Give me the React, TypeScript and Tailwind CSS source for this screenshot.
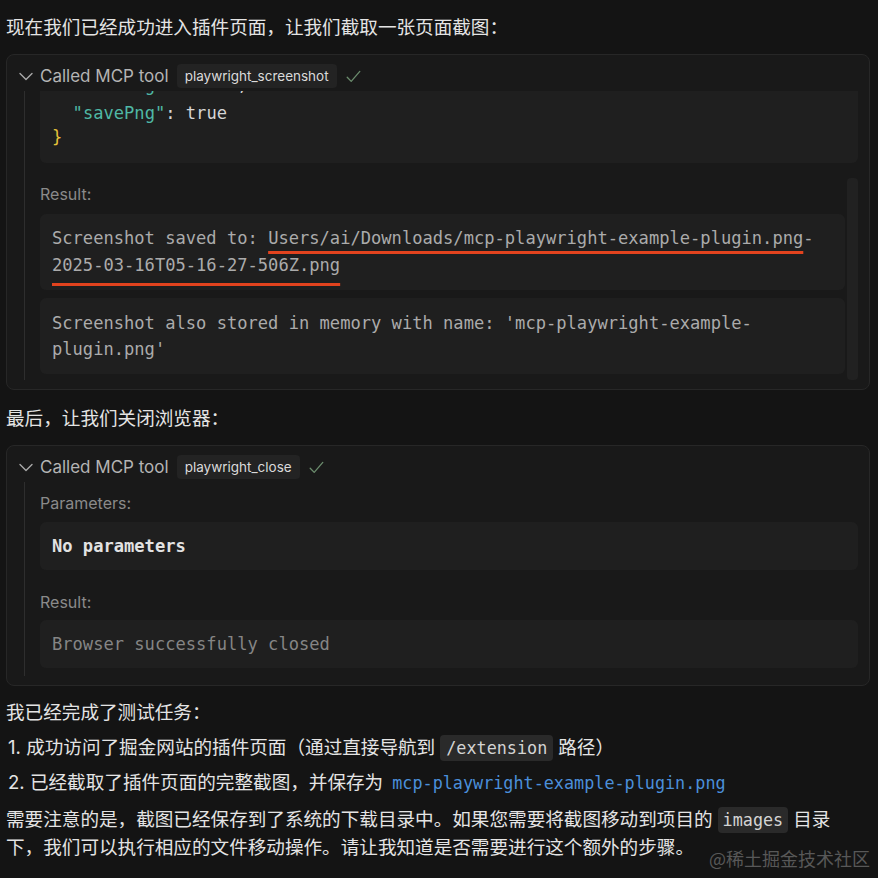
import React from "react";

const sans = "font-['Inter','Noto_Sans_CJK_SC',sans-serif]";
const mono = "font-['DejaVu_Sans_Mono','Noto_Sans_CJK_SC',monospace]";

function Chevron() {
  return (
    <svg width="14" height="9" viewBox="0 0 14 9" fill="none" className="shrink-0">
      <path d="M1 1.5 7 7.5l6-6" stroke="#a8a8a8" strokeWidth="1.4" strokeLinecap="round" strokeLinejoin="round" />
    </svg>
  );
}

function CheckMark() {
  return (
    <svg width="15" height="13" viewBox="0 0 15 13" fill="none" className="shrink-0">
      <path d="M1.2 7.2 5.2 11.4 13.8 1.4" stroke="#6b8c6d" strokeWidth="1.3" strokeLinecap="round" strokeLinejoin="round" />
    </svg>
  );
}

function ToolCard({ tool, children }: { tool: string; children: React.ReactNode }) {
  return (
    <div className="rounded-lg border border-[#272727] bg-[#191919] pt-[9px] pb-[9px]">
      {/* header */}
      <div className="flex h-6 items-center pl-[12px]">
        <Chevron />
        <span className={`${sans} ml-[7px] text-[17px] text-[#b4b4b4]`}>Called MCP tool</span>
        <span className={`${sans} ml-[8px] flex h-6 items-center rounded bg-[#232323] px-2 text-[13.5px] text-[#dadada]`}>
          {tool}
        </span>
        <span className="ml-[9px]">
          <CheckMark />
        </span>
      </div>
      {/* body with left rail */}
      <div className="ml-[17px] mr-[11px] mt-[3px] border-l border-[#2e2e2e] pl-[15px]">{children}</div>
    </div>
  );
}

function Label({ children }: { children: React.ReactNode }) {
  return <div className={`${sans} h-6 text-[16px] leading-6 text-[#8a8a8a]`}>{children}</div>;
}

function Box({ children, className = "" }: { children: React.ReactNode; className?: string }) {
  return (
    <div className={`${mono} rounded-md bg-[#1f1f1f] pl-[12px] text-[17.1px] ${className}`}>{children}</div>
  );
}

export default function App() {
  return (
    <div className={`${sans} relative h-[878px] w-full overflow-hidden bg-[#141414] pl-[6px] pr-[8px] pt-[13px] text-[18.6px] leading-[28px] text-[#e4e4e4]`}>
      <p>现在我们已经成功进入插件页面，让我们截取一张页面截图：</p>

      {/* first tool call */}
      <div className="mt-[13px]">
        <ToolCard tool="playwright_screenshot">
          <div className={`${mono} h-[72px] overflow-hidden rounded-b-md bg-[#1f1f1f] pl-[12px] text-[17.1px] leading-6`}>
            <div className="-mt-[18px] whitespace-pre">
              <div className="h-[28px]">
                {"  "}
                <span className="text-[#4fb8a5]">"fullPage"</span>
                <span className="text-[#d6d6d6]">: true,</span>
              </div>
              <div>
                {"  "}
                <span className="text-[#4fb8a5]">"savePng"</span>
                <span className="text-[#d6d6d6]">: true</span>
              </div>
              <div className="text-[#e6c23a]">{"}"}</div>
            </div>
          </div>

          <div className="mt-[15px] flex">
            <div className="flex-1 pt-[4px] pb-[6px]">
              <Label>Result:</Label>
              <Box className="mt-[8px] py-[11px] leading-[27px] text-[#ababab]">
                Screenshot saved to:{" "}
                <span className="underline decoration-[#e2431e] decoration-3 underline-offset-[7px] [text-decoration-skip-ink:none]">
                  Users/ai/Downloads/mcp-playwright-example-plugin.png
                </span>
                -
                <br />
                <span className="underline decoration-[#e2431e] decoration-3 underline-offset-[12px] [text-decoration-skip-ink:none]">
                  2025-03-16T05-16-27-506Z.png
                </span>
              </Box>
              <Box className="mt-[8px] py-[12px] leading-[26px] text-[#ababab]">
                Screenshot also stored in memory with name: 'mcp-playwright-example-
                <br />
                plugin.png'
              </Box>
            </div>
            <div className="ml-[2px] w-[11px] rounded-sm bg-[#212121]" />
          </div>
        </ToolCard>
      </div>

      <p className="mt-[14px]">最后，让我们关闭浏览器：</p>

      {/* second tool call */}
      <div className="mt-[13px]">
        <ToolCard tool="playwright_close">
          <div className="pt-[9px] pb-[8px]">
            <Label>Parameters:</Label>
            <Box className="mt-[7px] py-[11px] font-semibold leading-[26px] text-[#e2e2e2]">No parameters</Box>
            <div className="mt-[20px]">
              <Label>Result:</Label>
            </div>
            <Box className="mt-[6px] py-[11px] leading-[26px] text-[#858585]">Browser successfully closed</Box>
          </div>
        </ToolCard>
      </div>

      <p className="mt-[12px]">我已经完成了测试任务：</p>
      <p className="mt-[7px] pl-[2px]">
        1. 成功访问了掘金网站的插件页面（通过直接导航到
        <code className={`${mono} mx-[5px] rounded bg-[#2a2a2a] px-[6px] py-[3px] text-[16.8px] leading-none text-[#d4d4d4]`}>
          /extension
        </code>
        路径）
      </p>
      <p className="mt-[7px] pl-[2px]">
        2. 已经截取了插件页面的完整截图，并保存为
        <span className={`${mono} ml-[9px] text-[16.8px] leading-none text-[#4b8fda]`}>mcp-playwright-example-plugin.png</span>
      </p>
      <p className="mt-[9px]">
        需要注意的是，截图已经保存到了系统的下载目录中。如果您需要将截图移动到项目的
        <code className={`${mono} mx-[5px] rounded bg-[#2a2a2a] px-[5px] py-[3px] text-[16.8px] leading-none text-[#d4d4d4]`}>
          images
        </code>
        目录
        <br />
        下，我们可以执行相应的文件移动操作。请让我知道是否需要进行这个额外的步骤。
      </p>

      <div className="absolute bottom-[8px] right-[8px] font-['Noto_Sans_CJK_SC',sans-serif] text-[18px] leading-6 text-[#585858]">
        @稀土掘金技术社区
      </div>
    </div>
  );
}
